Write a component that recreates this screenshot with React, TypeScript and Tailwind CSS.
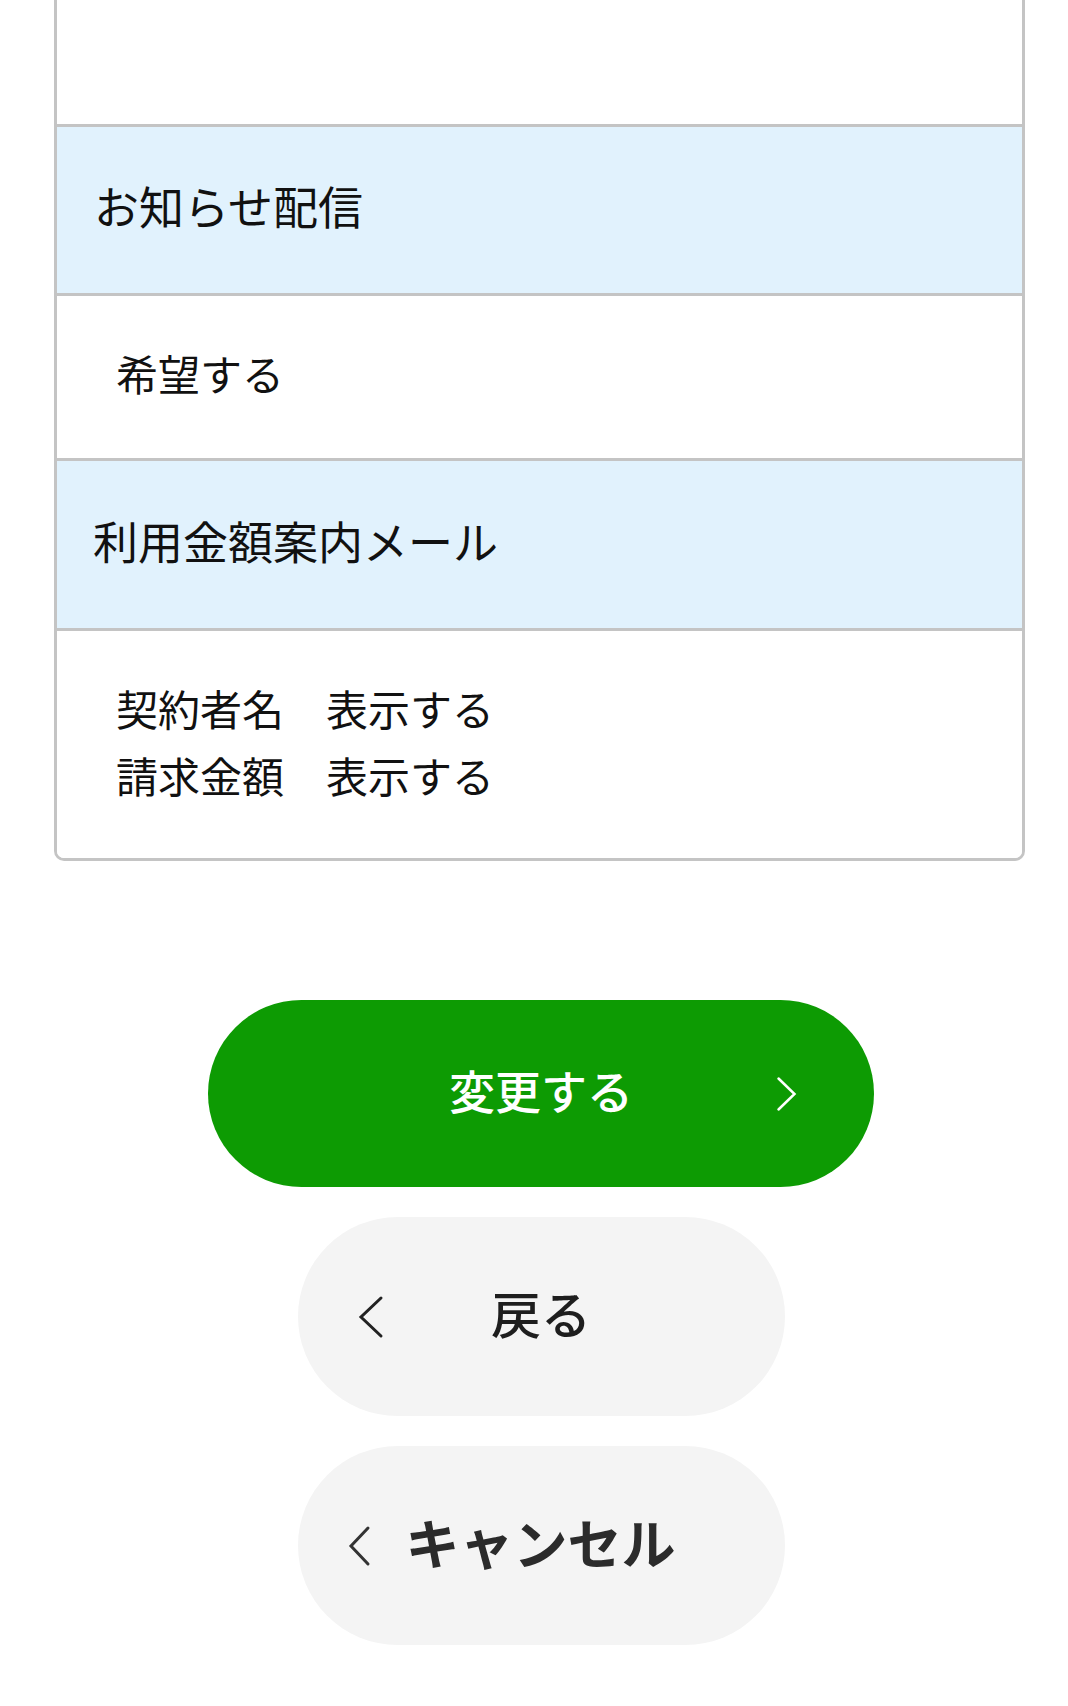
function Chevron({ dir, w, h, stroke, width }: { dir: 'left' | 'right'; w: number; h: number; stroke: string; width: number }) {
  const pts =
    dir === 'right'
      ? `${width},${width} ${w - width},${h / 2} ${width},${h - width}`
      : `${w - width},${width} ${width},${h / 2} ${w - width},${h - width}`;
  return (
    <svg width={w} height={h} viewBox={`0 0 ${w} ${h}`} fill="none">
      <polyline points={pts} stroke={stroke} strokeWidth={width} strokeLinecap="round" strokeLinejoin="miter" />
    </svg>
  );
}

export default function App() {
  return (
    <div
      className="min-h-[1706px] bg-white text-[#111]"
      style={{ fontFamily: '"Noto Sans CJK JP", "Noto Sans", sans-serif' }}
    >
      <div className="ml-[54px] w-[971px] overflow-hidden rounded-b-[10px] border-x-[3px] border-b-[3px] border-[#c4c4c4]">
        <div className="h-[127px] border-b-[3px] border-[#c4c4c4] bg-white" />
        <div className="flex h-[169px] items-center border-b-[3px] border-[#c4c4c4] bg-[#e1f2fd] pb-[9px] pl-[37px] text-[45px] leading-none">
          お知らせ配信
        </div>
        <div className="flex h-[165px] items-center border-b-[3px] border-[#c4c4c4] bg-white pb-[8px] pl-[59px] text-[42px] leading-none">
          希望する
        </div>
        <div className="flex h-[170px] items-center border-b-[3px] border-[#c4c4c4] bg-[#e1f2fd] pb-[9px] pl-[36px] text-[45px] leading-none">
          利用金額案内メール
        </div>
        <div className="flex h-[227px] flex-col justify-center bg-white pb-[8px] pl-[59px] text-[42px] leading-[67px]">
          <p>契約者名　表示する</p>
          <p>請求金額　表示する</p>
        </div>
      </div>

      <div className="mt-[139px] flex flex-col items-center gap-[30px] pl-[14px]">
        <button className="relative flex h-[187px] w-[666px] items-center justify-center rounded-full bg-[#0d9b03] pb-[9px] text-[46px] font-medium text-white">
          変更する
          <span className="absolute right-[77px] top-1/2 -translate-y-1/2">
            <Chevron dir="right" w={21} h={36} stroke="#ffffff" width={2.5} />
          </span>
        </button>

        <button className="relative flex h-[199px] w-[487px] items-center justify-center rounded-full bg-[#f4f4f4] pb-[9px] text-[50px] font-medium text-[#1e1e1e]">
          <span className="absolute left-[60px] top-1/2 -translate-y-1/2">
            <Chevron dir="left" w={26} h={44} stroke="#222222" width={3} />
          </span>
          戻る
        </button>

        <button className="flex h-[199px] w-[487px] items-center gap-[35px] rounded-full bg-[#f4f4f4] pl-[50px] text-[54px] font-bold text-[#2b2b2b]">
          <Chevron dir="left" w={23} h={42} stroke="#333333" width={3} />
          <span className="pb-[9px]">キャンセル</span>
        </button>
      </div>
    </div>
  );
}
